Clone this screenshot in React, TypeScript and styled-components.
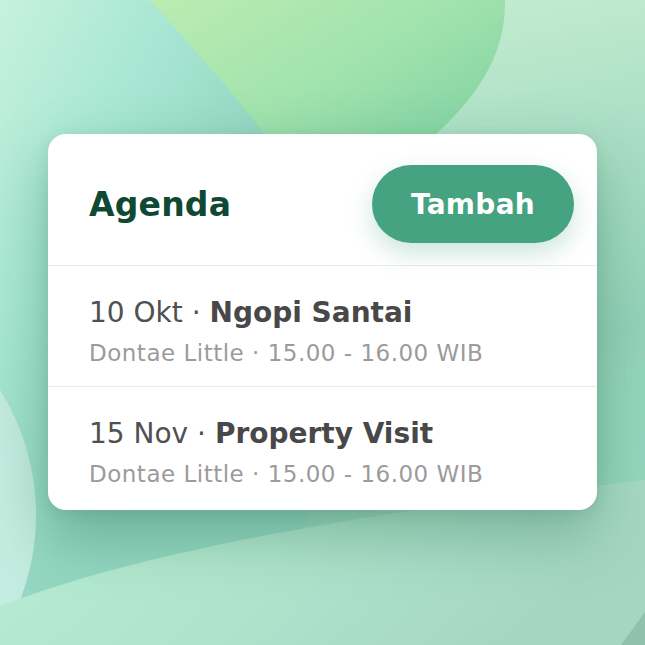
import React from "react";
import styled, { createGlobalStyle } from "styled-components";

const Global = createGlobalStyle`
  html, body { margin: 0; padding: 0; }
  body { font-family: "DejaVu Sans", Verdana, sans-serif; }
  #root { width: 645px; height: 645px; }
`;

const Stage = styled.div`
  position: relative;
  width: 645px;
  height: 645px;
  overflow: hidden;
  background: #a8e0c8;
  display: flex;
  align-items: flex-start;
  padding: 134px 0 0 48px;
  box-sizing: border-box;
`;

const Backdrop = styled.svg`
  position: absolute;
  inset: 0;
  width: 645px;
  height: 645px;
`;

const Card = styled.section`
  position: relative;
  width: 549px;
  background: #ffffff;
  border-radius: 18px;
  box-shadow: 0 26px 60px rgba(35, 105, 75, 0.36), 0 4px 14px rgba(35, 105, 75, 0.12);
  overflow: hidden;
`;

const Header = styled.header`
  height: 132px;
  box-sizing: border-box;
  display: flex;
  align-items: center;
  justify-content: space-between;
  padding: 9px 23px 0 41px;
  border-bottom: 1px solid #ebebeb;
`;

const Title = styled.h1`
  margin: 0;
  font-size: 33px;
  font-weight: 700;
  color: #0f4833;
  letter-spacing: 0.2px;
  line-height: normal;
`;

const AddButton = styled.button`
  width: 202px;
  height: 78px;
  border: none;
  border-radius: 39px;
  background: #45a381;
  color: #ffffff;
  font-family: inherit;
  font-size: 28px;
  font-weight: 700;
  letter-spacing: 0.3px;
  line-height: normal;
  padding: 0;
  box-shadow: 0 10px 24px rgba(69, 163, 129, 0.28);
  cursor: pointer;
`;

const Row = styled.div<{ $last?: boolean }>`
  height: ${(p) => (p.$last ? 123 : 121)}px;
  box-sizing: border-box;
  padding: 30px 0 0 41px;
  border-bottom: ${(p) => (p.$last ? "none" : "1px solid #ebebeb")};
  display: flex;
  flex-direction: column;
  gap: 9px;
`;

const Main = styled.div`
  font-size: 28px;
  color: #505050;
  font-weight: 400;
  line-height: 34px;
  white-space: nowrap;
`;

const Strong = styled.span`
  font-weight: 700;
  color: #484848;
`;

const Sub = styled.div`
  font-size: 23px;
  color: #9b9b9b;
  font-weight: 400;
  line-height: 28px;
  letter-spacing: 0.5px;
  white-space: nowrap;
`;

const items = [
  { date: "10 Okt", title: "Ngopi Santai", meta: "Dontae Little · 15.00 - 16.00 WIB" },
  { date: "15 Nov", title: "Property Visit", meta: "Dontae Little · 15.00 - 16.00 WIB" },
];

export default function App() {
  return (
    <>
      <Global />
      <Stage>
        <Backdrop viewBox="0 0 645 645">
          <defs>
            <linearGradient id="base" x1="0.4" y1="0" x2="0.6" y2="1">
              <stop offset="0" stopColor="#c9efd1" />
              <stop offset="0.3" stopColor="#abdfc6" />
              <stop offset="0.6" stopColor="#94d2b9" />
              <stop offset="1" stopColor="#a9dcc8" />
            </linearGradient>
            <linearGradient id="blob" x1="0" y1="0" x2="1" y2="0.8">
              <stop offset="0" stopColor="#bcecb1" />
              <stop offset="0.55" stopColor="#a0e2ae" />
              <stop offset="1" stopColor="#7fd1a2" />
            </linearGradient>
            <linearGradient id="left" gradientUnits="userSpaceOnUse" x1="0" y1="0" x2="270" y2="140">
              <stop offset="0" stopColor="#c6f1df" />
              <stop offset="0.5" stopColor="#a8e7d3" />
              <stop offset="1" stopColor="#93d6c1" />
            </linearGradient>
            <linearGradient id="rightArc" x1="0" y1="0" x2="1" y2="1">
              <stop offset="0" stopColor="#90d4bb" />
              <stop offset="1" stopColor="#a0dcc6" />
            </linearGradient>
            <linearGradient id="bottom" x1="0" y1="0" x2="1" y2="0.3">
              <stop offset="0" stopColor="#b8eed2" />
              <stop offset="0.5" stopColor="#b0e5cd" />
              <stop offset="1" stopColor="#a5d6c4" />
            </linearGradient>
            <radialGradient id="glow" cx="0.2" cy="0.5" r="0.8">
              <stop offset="0" stopColor="#d6f2ea" />
              <stop offset="1" stopColor="#c3ebdf" />
            </radialGradient>
          </defs>
          <rect x="0" y="0" width="645" height="645" fill="url(#base)" />
          <circle cx="-150" cy="374" r="479" fill="url(#left)" />
          <path d="M150 0 H505 C506 55 478 100 418 150 L290 170 C250 110 205 62 150 0 Z" fill="url(#blob)" />
          <circle cx="-200" cy="515" r="236" fill="url(#glow)" />
          <ellipse cx="790" cy="660" rx="330" ry="330" fill="url(#rightArc)" />
          <path d="M0 606 C120 560 300 520 645 480 V645 H0 Z" fill="url(#bottom)" />
          <path d="M645 612 L621 645 H645 Z" fill="#8fc1ad" />
        </Backdrop>
        <Card>
          <Header>
            <Title>Agenda</Title>
            <AddButton>Tambah</AddButton>
          </Header>
          {items.map((it, i) => (
            <Row key={it.title} $last={i === items.length - 1}>
              <Main>
                {it.date} · <Strong>{it.title}</Strong>
              </Main>
              <Sub>{it.meta}</Sub>
            </Row>
          ))}
        </Card>
      </Stage>
    </>
  );
}
